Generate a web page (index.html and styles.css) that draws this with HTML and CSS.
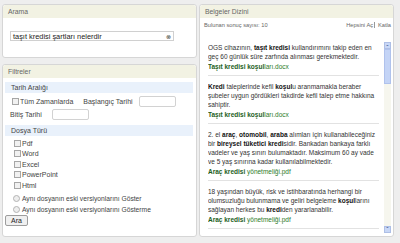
FILE: index.html
```html
<!DOCTYPE html>
<html>
  <head>
    <title>Belgeler</title>
    <link rel="stylesheet" href="styles.css">
  </head>
  <body>
    <div class="left">
      <div class="panel search-panel">
        <div class="panel-head">Arama</div>
        <div class="search-body">
          <div class="search-box">
            <span class="search-text">taşıt kredisi şartları nelerdir</span>
            <span class="clear">&#8855;</span>
          </div>
        </div>
      </div>

      <div class="panel filter-panel">
        <div class="panel-head">Filtreler</div>
        <div class="section">Tarih Aralığı</div>
        <div class="row">
          <label class="check"><span class="box"></span>Tüm Zamanlarda</label>
          <span class="date-label">Başlangıç Tarihi</span>
          <span class="date-input"></span>
        </div>
        <div class="row row-end">
          <span class="date-label first">Bitiş Tarihi</span>
          <span class="date-input"></span>
        </div>
        <div class="section">Dosya Türü</div>
        <div class="types">
          <label class="check"><span class="box"></span>Pdf</label>
          <label class="check"><span class="box"></span>Word</label>
          <label class="check"><span class="box"></span>Excel</label>
          <label class="check"><span class="box"></span>PowerPoint</label>
          <label class="check"><span class="box"></span>Html</label>
        </div>
        <div class="radios">
          <label class="radio"><span class="dot"></span>Aynı dosyanın eski versiyonlarını Göster</label>
          <label class="radio"><span class="dot"></span>Aynı dosyanın eski versiyonlarını Gösterme</label>
        </div>
        <button class="button-search">Ara</button>
      </div>
    </div>

    <div class="panel results-panel">
      <div class="panel-head">Belgeler Dizini</div>
      <div class="count-row">
        <span>Bulunan sonuç sayısı: 10</span>
        <span class="links"><span class="open-all">Hepsini Aç</span>Katla</span>
      </div>
      <div class="list-wrap">
        <div class="list">
          <div class="item">
            <p>OGS cihazının, <b>taşıt kredisi</b> kullandırımını takip eden en geç 60 günlük süre zarfında alınması gerekmektedir.</p>
            <p class="file"><b>Taşıt kredisi koşul</b>ları.docx</p>
          </div>
          <div class="item">
            <p><b>Kredi</b> taleplerinde kefil <b>koşul</b>u aranmamakla beraber şubeler uygun gördükleri takdirde kefil talep etme hakkına sahiptir.</p>
            <p class="file"><b>Taşıt kredisi koşul</b>ları.docx</p>
          </div>
          <div class="item">
            <p>2. el <b>araç</b>, <b>otomobil</b>, <b>araba</b> alımları için kullanabileceğiniz bir <b>bireysel tüketici kredi</b>sidir. Bankadan bankaya farklı vadeler ve yaş sınırı bulumaktadır. Maksimum 60 ay vade ve 5 yaş sınırına kadar kullanılabilmektedir.</p>
            <p class="file"><b>Araç kredisi</b> yönetmeliği.pdf</p>
          </div>
          <div class="item">
            <p>18 yaşından büyük, risk ve istihbaratında herhangi bir olumsuzluğu bulunmama ve geliri belgeleme <b>koşul</b>larını sağlayan herkes bu <b>kredi</b>den yararlanabilir.</p>
            <p class="file"><b>Araç kredisi</b> yönetmeliği.pdf</p>
          </div>
        </div>
        <div class="scrollbar">
          <div class="arrow">&#710;</div>
          <div class="thumb"></div>
          <div class="track"></div>
          <div class="arrow down">&#711;</div>
        </div>
      </div>
    </div>
  </body>
</html>
```

FILE: styles.css
```css
body {
  margin: 0;
  padding: 4px 6px 6px 2px;
  background-color: #eeeeee;
  font-family: "Liberation Sans", Arial, sans-serif;
  font-size: 7px;
  color: #444444;
  display: flex;
  gap: 2px;
  height: 243px;
  box-sizing: border-box;
}
.left {
  width: 195px;
  flex-shrink: 0;
  display: flex;
  flex-direction: column;
  gap: 6px;
}
.panel {
  background-color: white;
  border: 1px solid #d6d6d6;
  border-radius: 3px;
  box-sizing: border-box;
}
.panel-head {
  background-color: #f2f2e3;
  color: #666666;
  height: 13px;
  line-height: 13px;
  padding-left: 5px;
  font-size: 6.8px;
  border-radius: 3px 3px 0 0;
}
.search-panel {
  height: 54px;
  flex-shrink: 0;
}
.search-body {
  padding: 13px 0 0 7px;
}
.search-box {
  width: 158px;
  height: 8px;
  border: 1px solid #d0d0d0;
  display: flex;
  align-items: center;
  justify-content: space-between;
  padding: 0 2px 0 2px;
  color: #222222;
  font-size: 7.4px;
}
.clear {
  font-size: 6px;
  color: #444444;
}
.filter-panel {
  flex: 1;
  min-height: 0;
}
.section {
  background-color: #e9f1fb;
  margin: 4px 3px 0 2px;
  height: 11px;
  line-height: 11px;
  padding-left: 6px;
  font-size: 7px;
  color: #444444;
}
.row {
  display: flex;
  align-items: center;
  padding-left: 9px;
  margin-top: 2px;
  height: 12px;
}
.row-end {
  padding-left: 7px;
  margin-top: 1px;
}
.check {
  display: flex;
  align-items: center;
  gap: 1px;
}
.box {
  width: 5px;
  height: 5px;
  border: 1px solid #a6a6a6;
  background-color: #f1f1f1;
}
.date-label {
  margin-left: 10px;
}
.date-label.first {
  margin-left: 0;
}
.date-input {
  width: 35px;
  height: 9px;
  border: 1px solid #d2d2d2;
  border-radius: 2px;
  margin-left: 6px;
}
.row-end .date-input {
  margin-left: 10px;
}
.row-end + .section {
  margin-top: 5px;
}
.types {
  display: flex;
  flex-direction: column;
  padding: 2px 0 0 11px;
}
.types .check {
  height: 10.5px;
}
.radios {
  display: flex;
  flex-direction: column;
  padding: 2px 0 0 10px;
}
.radio {
  display: flex;
  align-items: center;
  gap: 2px;
  height: 11px;
  font-size: 6.7px;
}
.dot {
  width: 5px;
  height: 5px;
  border: 1px solid #b4b4b4;
  border-radius: 50%;
  background-color: #eeeeee;
}
.button-search {
  display: block;
  margin: 0 0 0 2px;
  font-family: "Liberation Sans", Arial, sans-serif;
  font-size: 7px;
  color: #222222;
  background-color: #f0f0f0;
  border: 1px solid #9d9d9d;
  border-radius: 2px;
  padding: 0 4px;
  width: 23px;
  height: 11px;
  line-height: 9px;
}
.results-panel {
  width: 195px;
  flex-shrink: 0;
  display: flex;
  flex-direction: column;
}
.count-row {
  display: flex;
  justify-content: space-between;
  align-items: center;
  padding: 0 2px 0 4px;
  font-size: 5.7px;
  color: #666666;
  height: 14px;
}
.open-all {
  border-right: 1px solid #999999;
  padding-right: 1px;
  margin-right: 3px;
}
.list-wrap {
  flex: 1;
  min-height: 0;
  display: flex;
  margin: 10px 2px 3px 8px;
}
.list {
  flex: 1;
  padding-right: 5px;
  overflow: hidden;
}
.item {
  border-bottom: 1px solid #e2e2e2;
  padding: 1px 0 4px 0;
  margin-bottom: 5px;
}
.item p {
  margin: 0;
  line-height: 9px;
  font-size: 6.5px;
  color: #333333;
}
.item b {
  color: #111111;
}
.item .file {
  color: #2a7a2a;
  margin-top: 1px;
}
.item .file b {
  color: #1c5e1c;
}
.scrollbar {
  width: 7px;
  display: flex;
  flex-direction: column;
  background-color: #f6f6ee;
}
.arrow {
  height: 7px;
  background-color: #c8d7f6;
  border: 1px solid #aebfe6;
  box-sizing: border-box;
  font-size: 7px;
  line-height: 9px;
  text-align: center;
  color: #35508a;
}
.arrow.down {
  line-height: 6px;
}
.thumb {
  height: 35px;
  background-color: #c4d4f6;
  border: 1px solid #b0c2ec;
  box-sizing: border-box;
}
.track {
  flex: 1;
}
```
